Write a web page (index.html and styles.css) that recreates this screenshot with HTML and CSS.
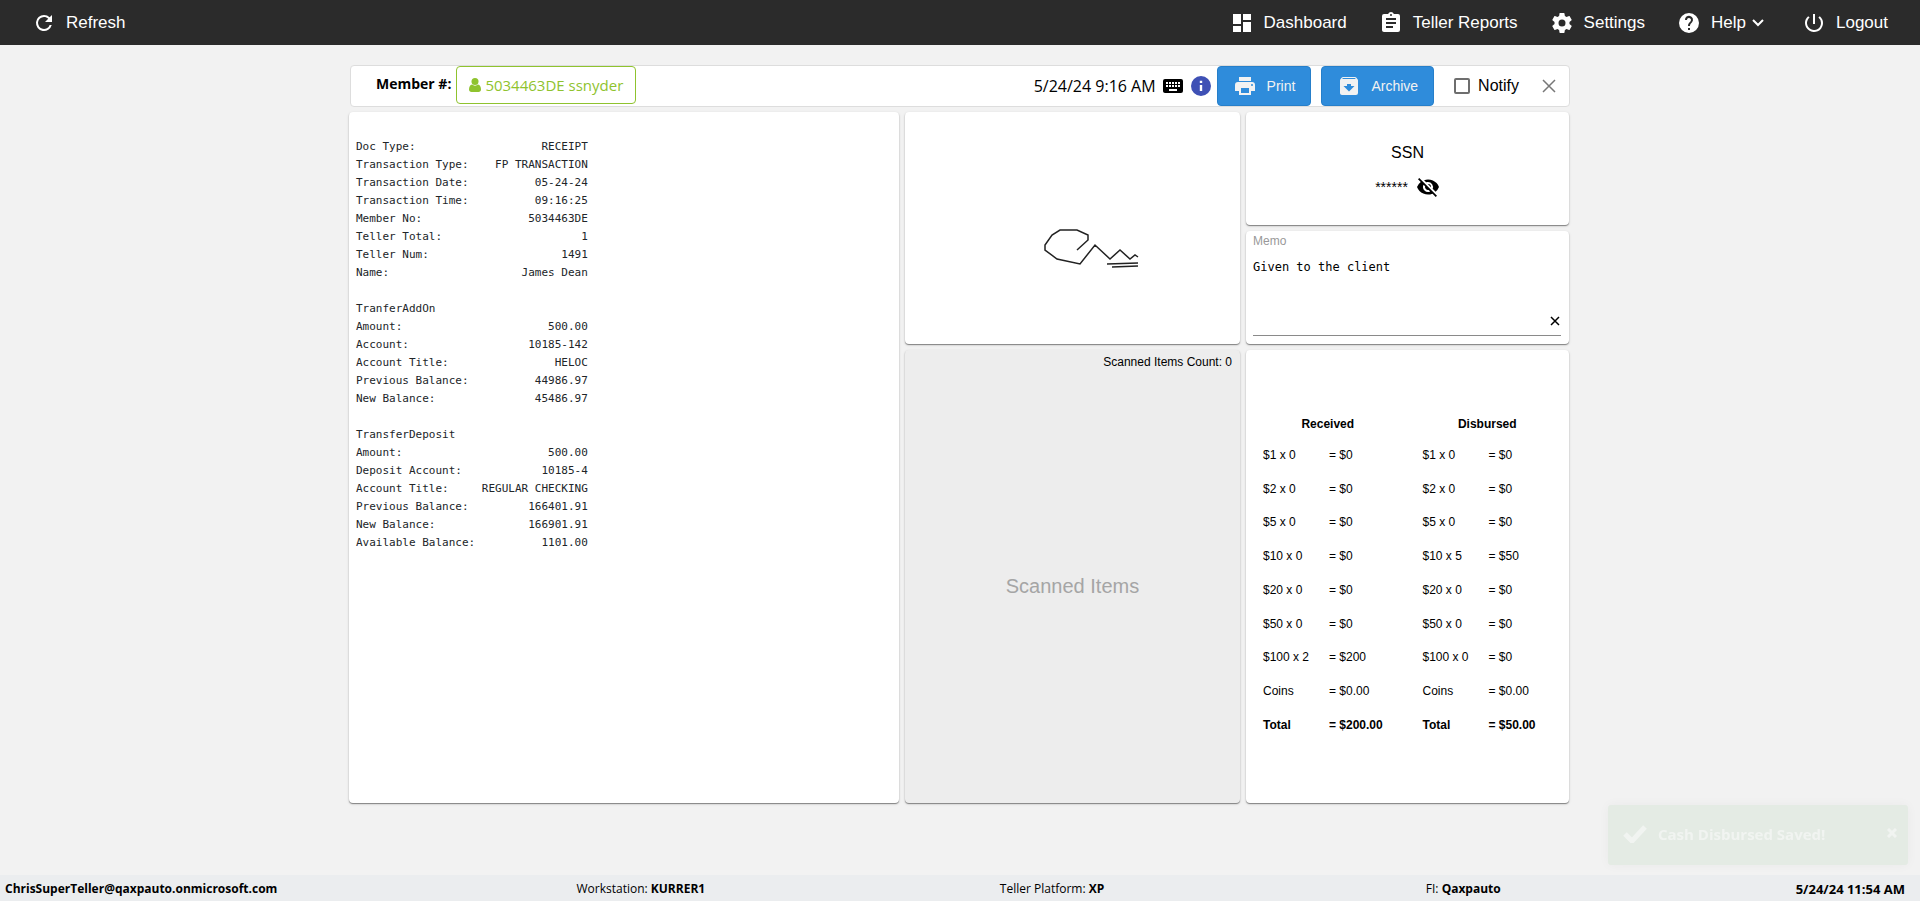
FILE: index.html
```html
<!DOCTYPE html>
<html lang="en">
<head>
<meta charset="utf-8">
<title>Teller receipt</title>
<link rel="stylesheet" href="styles.css">
</head>
<body>
<header class="topbar">
  <a class="nav-link" href="#refresh"><svg class="icon" viewBox="0 0 24 24"><path d="M17.65 6.35A7.96 7.96 0 0 0 12 4a8 8 0 1 0 7.73 10h-2.08A6 6 0 1 1 12 6c1.66 0 3.14.69 4.22 1.78L13 11h7V4z"/></svg>Refresh</a>
  <nav class="nav">
    <a class="nav-link" href="#dashboard"><svg class="icon" viewBox="0 0 24 24"><path d="M3 13h8V3H3zm0 8h8v-6H3zm10 0h8V11h-8zm0-18v6h8V3z"/></svg>Dashboard</a>
    <a class="nav-link" href="#reports"><svg class="icon" viewBox="0 0 24 24"><path d="M19 3h-4.18C14.4 1.84 13.3 1 12 1s-2.4.84-2.82 2H5a2 2 0 0 0-2 2v14c0 1.1.9 2 2 2h14a2 2 0 0 0 2-2V5a2 2 0 0 0-2-2zm-7 0a1 1 0 1 1 0 2 1 1 0 0 1 0-2zm2 14H7v-2h7zm3-4H7v-2h10zm0-4H7V7h10z"/></svg>Teller Reports</a>
    <a class="nav-link" href="#settings"><svg class="icon" viewBox="0 0 24 24"><path d="M19.43 12.98c.04-.32.07-.64.07-.98s-.03-.66-.07-.98l2.11-1.65c.19-.15.24-.42.12-.64l-2-3.46c-.12-.22-.39-.3-.61-.22l-2.49 1c-.52-.4-1.08-.73-1.69-.98l-.38-2.65A.49.49 0 0 0 14 2h-4c-.25 0-.46.18-.49.42l-.38 2.65c-.61.25-1.17.59-1.69.98l-2.49-1c-.23-.09-.49 0-.61.22l-2 3.46c-.13.22-.07.49.12.64l2.11 1.65c-.04.32-.07.65-.07.98s.03.66.07.98l-2.11 1.65c-.19.15-.24.42-.12.64l2 3.46c.12.22.39.3.61.22l2.49-1c.52.4 1.08.73 1.69.98l.38 2.65c.03.24.24.42.49.42h4c.25 0 .46-.18.49-.42l.38-2.65c.61-.25 1.17-.59 1.69-.98l2.49 1c.23.09.49 0 .61-.22l2-3.46c.12-.22.07-.49-.12-.64zM12 15.5a3.5 3.5 0 1 1 0-7 3.5 3.5 0 0 1 0 7z"/></svg>Settings</a>
    <a class="nav-link" href="#help"><svg class="icon" viewBox="0 0 24 24"><path d="M12 2a10 10 0 1 0 0 20 10 10 0 0 0 0-20zm1 17h-2v-2h2zm2.07-7.75-.9.92C13.45 12.9 13 13.5 13 15h-2v-.5c0-1.1.45-2.1 1.17-2.83l1.24-1.26A2 2 0 1 0 10 9H8a4 4 0 1 1 7.07 2.25z"/></svg>Help<svg class="chevron" viewBox="0 0 12 8"><path d="M1 1l5 5 5-5"/></svg></a>
    <a class="nav-link" href="#logout"><svg class="icon" viewBox="0 0 24 24"><path d="M13 3h-2v10h2zm4.83 2.17-1.42 1.42A6.92 6.92 0 0 1 19 12a7 7 0 1 1-11.42-5.42L6.17 5.17A8.93 8.93 0 0 0 3 12a9 9 0 1 0 14.83-6.83z"/></svg>Logout</a>
  </nav>
</header>

<main class="page">
  <section class="toolbar">
    <span class="member-label">Member #:</span>
    <button class="member" type="button"><svg class="user-icon" viewBox="0 0 12 14"><circle cx="6" cy="3.500" r="3.500"/><path d="M3 6.500C1 7 0 8.800 0 11.500 0 13 1 14 2.500 14h7c1.500 0 2.500-1 2.500-2.500C12 8.800 11 7 9 6.500 7.500 8 4.500 8 3 6.500z"/></svg>5034463DE ssnyder</button>
    <time class="stamp">5/24/24 9:16 AM</time>
    <svg class="icon keyboard" viewBox="0 0 24 24"><path d="M20 5H4a2 2 0 0 0-2 2v10c0 1.100.9 2 2 2h16a2 2 0 0 0 2-2V7a2 2 0 0 0-2-2zm-9 3h2v2h-2zm0 3h2v2h-2zM8 8h2v2H8zm0 3h2v2H8zm-1 2H5v-2h2zm0-3H5V8h2zm9 7H8v-2h8zm0-4h-2v-2h2zm0-3h-2V8h2zm3 3h-2v-2h2zm0-3h-2V8h2z"/></svg>
    <svg class="icon info" viewBox="0 0 24 24"><path d="M12 2a10 10 0 1 0 0 20 10 10 0 0 0 0-20zm1.200 15h-2.400v-6h2.400zm0-8h-2.400V6.700h2.400z"/></svg>
    <button class="action print" type="button"><svg class="action-icon" viewBox="0 0 24 24"><path d="M19 8H5a3 3 0 0 0-3 3v6h4v4h12v-4h4v-6a3 3 0 0 0-3-3zm-3 11H8v-5h8zm3-7a1 1 0 1 1 0-2 1 1 0 0 1 0 2zm-1-9H6v4h12z"/></svg>Print</button>
    <button class="action archive" type="button"><svg class="action-icon" viewBox="0 0 24 24"><path d="M20.540 5.230l-1.390-1.680C18.880 3.210 18.470 3 18 3H6c-.47 0-.88.21-1.160.55L3.460 5.230C3.170 5.570 3 6.020 3 6.500V19c0 1.100.9 2 2 2h14a2 2 0 0 0 2-2V6.500c0-.48-.17-.93-.46-1.270zM12 17.500L6.500 12H10v-2h4v2h3.500zM5.120 5l.81-1h12l.94 1z"/></svg>Archive</button>
    <label class="notify"><input class="notify-box" type="checkbox">Notify</label>
    <button class="close" type="button" aria-label="Close"><svg class="close-icon" viewBox="0 0 14 14"><path d="M1 1l12 12M13 1L1 13"/></svg></button>
  </section>

  <div class="board">
    <section class="card receipt">
<pre class="receipt-text">Doc Type:                   RECEIPT
Transaction Type:    FP TRANSACTION
Transaction Date:          05-24-24
Transaction Time:          09:16:25
Member No:                5034463DE
Teller Total:                     1
Teller Num:                    1491
Name:                    James Dean

TranferAddOn
Amount:                      500.00
Account:                  10185-142
Account Title:                HELOC
Previous Balance:          44986.97
New Balance:               45486.97

TransferDeposit
Amount:                      500.00
Deposit Account:            10185-4
Account Title:     REGULAR CHECKING
Previous Balance:         166401.91
New Balance:              166901.91
Available Balance:          1101.00</pre>
    </section>

    <section class="card signature">
      <svg class="ink" viewBox="0 0 96 42"><path d="M34 22L45 12V7L34 2H17L9 7 2 17v5l12 9 23 5L52 17l15 14 10-9 10 9 5-4 3 2M64 36l31-1M69 39l26-1"/></svg>
    </section>

    <section class="card scanned">
      <p class="scanned-count">Scanned Items Count: 0</p>
      <p class="scanned-empty">Scanned Items</p>
    </section>

    <section class="card ssn">
      <h2 class="ssn-title">SSN</h2>
      <div class="ssn-row"><span class="ssn-mask">******</span><button class="eye" type="button" aria-label="Show SSN"><svg class="eye-icon" viewBox="0 0 24 24"><path d="M12 7a5 5 0 0 1 4.640 6.830l2.920 2.920A11.820 11.820 0 0 0 22.990 12 11.830 11.830 0 0 0 8.010 5.200l2.160 2.160C10.740 7.130 11.350 7 12 7zM2 4.270l2.280 2.280.46.46A11.800 11.800 0 0 0 1 12a11.830 11.830 0 0 0 15.380 6.660l.42.42L19.730 22 21 20.730 3.270 3zM7.530 9.800l1.550 1.550a3 3 0 0 0 3.570 3.570l1.550 1.550A5 5 0 0 1 7.530 9.800zm4.310-.78l3.150 3.150.02-.16a3 3 0 0 0-3-3z"/></svg></button></div>
    </section>

    <section class="card memo">
      <label class="memo-label" for="memo">Memo</label>
      <div class="memo-field">
        <textarea class="memo-text" id="memo">Given to the client</textarea>
        <button class="clear" type="button" aria-label="Clear memo"><svg class="clear-icon" viewBox="0 0 10 10"><path d="M1 1l8 8M9 1L1 9"/></svg></button>
      </div>
    </section>

    <section class="card cash">
      <table class="cash-table">
        <colgroup><col class="count-col"><col></colgroup>
        <thead><tr><th colspan="2">Received</th></tr></thead>
        <tbody>
          <tr><td>$1 x 0</td><td>= $0</td></tr>
          <tr><td>$2 x 0</td><td>= $0</td></tr>
          <tr><td>$5 x 0</td><td>= $0</td></tr>
          <tr><td>$10 x 0</td><td>= $0</td></tr>
          <tr><td>$20 x 0</td><td>= $0</td></tr>
          <tr><td>$50 x 0</td><td>= $0</td></tr>
          <tr><td>$100 x 2</td><td>= $200</td></tr>
          <tr><td>Coins</td><td>= $0.00</td></tr>
          <tr class="total"><td>Total</td><td>= $200.00</td></tr>
        </tbody>
      </table>
      <table class="cash-table">
        <colgroup><col class="count-col"><col></colgroup>
        <thead><tr><th colspan="2">Disbursed</th></tr></thead>
        <tbody>
          <tr><td>$1 x 0</td><td>= $0</td></tr>
          <tr><td>$2 x 0</td><td>= $0</td></tr>
          <tr><td>$5 x 0</td><td>= $0</td></tr>
          <tr><td>$10 x 5</td><td>= $50</td></tr>
          <tr><td>$20 x 0</td><td>= $0</td></tr>
          <tr><td>$50 x 0</td><td>= $0</td></tr>
          <tr><td>$100 x 0</td><td>= $0</td></tr>
          <tr><td>Coins</td><td>= $0.00</td></tr>
          <tr class="total"><td>Total</td><td>= $50.00</td></tr>
        </tbody>
      </table>
    </section>
  </div>
</main>

<div class="toast" role="status">
  <svg class="toast-check" viewBox="0 0 24 18"><path d="M2 9l7 7L22 2"/></svg>
  <span class="toast-text">Cash Disbursed Saved!</span>
  <button class="toast-close" type="button" aria-label="Dismiss"><svg class="toast-x" viewBox="0 0 10 10"><path d="M1 1l8 8M9 1L1 9"/></svg></button>
</div>

<footer class="statusbar">
  <b class="user">ChrisSuperTeller@qaxpauto.onmicrosoft.com</b>
  <span>Workstation: <b>KURRER1</b></span>
  <span>Teller Platform: <b>XP</b></span>
  <span>FI: <b>Qaxpauto</b></span>
  <b class="clock">5/24/24 11:54 AM</b>
</footer>
</body>
</html>
```
FILE: styles.css
```css
* { box-sizing: border-box; }

body {
  margin: 0;
  min-height: 100vh;
  display: flex;
  flex-direction: column;
  background: #f2f2f2;
  color: #000;
  font: 16px/20px "Liberation Sans", Arial, sans-serif;
}

button {
  font: inherit;
  cursor: pointer;
}

.icon {
  width: 24px;
  height: 24px;
  flex: none;
  fill: currentColor;
}

/* Top bar */
.topbar {
  display: flex;
  justify-content: space-between;
  align-items: center;
  height: 45px;
  padding: 0 32px;
  background: #2b2b2b;
}

.nav {
  display: flex;
  gap: 32px;
}

.nav-link {
  display: flex;
  align-items: center;
  gap: 10px;
  color: #fff;
  font-size: 17px;
  text-decoration: none;
}

.chevron {
  width: 12px;
  height: 8px;
  margin: 0 6px 0 -4px;
  fill: none;
  stroke: currentColor;
  stroke-width: 2;
}

/* Toolbar */
.page {
  flex: 1;
  display: flex;
  flex-direction: column;
  width: 100%;
  max-width: 1222px;
  margin: 0 auto;
  padding: 20px 0 72px;
}

.toolbar {
  display: flex;
  align-items: center;
  height: 42px;
  margin: 0 1px;
  padding: 0 6px 0 25px;
  background: #fff;
  border: 1px solid #ddd;
  border-radius: 4px;
}

.member-label {
  margin-right: 5px;
  padding-bottom: 4px;
  font: bold 14px/20px "Open Sans", "Noto Sans", sans-serif;
}

.member {
  display: flex;
  align-items: center;
  align-self: flex-start;
  gap: 4px;
  height: 38px;
  padding: 0 12px;
  color: #8fc32e;
  background: #fff;
  border: 1px solid #8fc32e;
  border-radius: 4px;
  font: 15px/20px "Open Sans", "Noto Sans", sans-serif;
}

.user-icon {
  width: 12px;
  height: 14px;
  fill: currentColor;
}

.stamp {
  margin-left: auto;
  font: 16px/20px "Open Sans", "Noto Sans", sans-serif;
}

.keyboard { margin-left: 5px; }

.info {
  margin: 0 4px;
  color: #3f51b5;
}

.action {
  display: flex;
  align-items: center;
  gap: 10px;
  height: 40px;
  padding: 0 15px;
  color: #f2f2f2;
  background: #2f8cdb;
  border: 1px solid #267fca;
  border-radius: 4px;
  font-size: 14px;
}

.archive { margin-left: 10px; }

.action-icon {
  width: 24px;
  height: 24px;
  fill: currentColor;
}

.notify {
  display: flex;
  align-items: center;
  gap: 8px;
  margin-left: 20px;
}

.notify-box {
  appearance: none;
  width: 16px;
  height: 16px;
  margin: 0;
  border: 2px solid #6e6e6e;
  border-radius: 2px;
}

.close {
  display: flex;
  margin-left: 16px;
  padding: 7px;
  background: none;
  border: 0;
}

.close-icon {
  width: 14px;
  height: 14px;
  stroke: #777;
  stroke-width: 1.5;
}

/* Cards */
.board {
  flex: 1;
  display: grid;
  grid-template-columns: 550fr 335fr 323fr;
  grid-template-rows: 113px 113px 1fr;
  gap: 6px;
  margin: 5px 2px 0 0;
}

.card {
  min-width: 0;
  background: #fff;
  border-radius: 4px;
  box-shadow: 0 1px 1px rgba(0, 0, 0, .4), 0 1px 3px rgba(0, 0, 0, .15);
}

.receipt {
  grid-row: 1 / 4;
  padding: 26px 7px;
}

.receipt-text {
  margin: 0;
  color: #212529;
  font: 11px/18px "DejaVu Sans Mono", monospace;
}

.signature {
  grid-column: 2;
  grid-row: 1 / 3;
  display: flex;
  align-items: center;
  justify-content: center;
  padding: 42px 0 0 36px;
}

.ink {
  width: 96px;
  height: 42px;
  fill: none;
  stroke: #222;
  stroke-width: 1.5;
}

.scanned {
  grid-column: 2;
  grid-row: 3;
  display: flex;
  flex-direction: column;
  background: #ededed;
}

.scanned-count {
  margin: 0;
  padding: 2px 8px;
  font-size: 12px;
  text-align: right;
}

.scanned-empty {
  flex: 1;
  display: flex;
  align-items: center;
  justify-content: center;
  margin: 0;
  padding-bottom: 6px;
  color: #a5a5a5;
  font-size: 20px;
}

.ssn {
  grid-column: 3;
  padding: 31px 8px 0;
}

.ssn-title {
  margin: 0 0 12px;
  font-size: 16px;
  font-weight: normal;
  text-align: center;
}

.ssn-row {
  display: flex;
  justify-content: center;
  align-items: center;
  gap: 8px;
}

.ssn-mask { font: 14px/20px "Liberation Sans", Arial, sans-serif; }

.eye {
  display: flex;
  padding: 0;
  background: none;
  border: 0;
}

.eye-icon {
  width: 24px;
  height: 24px;
}

.memo {
  grid-column: 3;
  display: flex;
  flex-direction: column;
  padding: 0 8px 8px 7px;
}

.memo-label {
  color: #999;
  font-size: 12px;
}

.memo-field {
  flex: 1;
  display: flex;
  align-items: flex-end;
  border-bottom: 1px solid #8a8a8a;
}

.memo-text {
  flex: 1;
  align-self: stretch;
  min-width: 0;
  padding: 6px 0 0;
  border: 0;
  background: none;
  resize: none;
  color: #000;
  font: 12px/20px "DejaVu Sans Mono", monospace;
}

.clear {
  padding: 0 1px 9px;
  background: none;
  border: 0;
  line-height: 0;
}

.clear-icon {
  width: 10px;
  height: 10px;
  stroke: #000;
  stroke-width: 1.5;
}

.cash {
  grid-column: 3;
  display: grid;
  grid-template-columns: 1fr 1fr;
  column-gap: 8px;
  align-items: start;
  padding: 60px 0 0 12px;
}

.cash-table {
  width: 100%;
  height: 332px;
  table-layout: fixed;
  border-collapse: collapse;
  font-size: 12px;
}

.count-col { width: 66px; }

.cash-table th {
  height: 28px;
  padding: 0 12px 0 0;
}

.cash-table td {
  height: 33px;
  padding: 0 5px;
}

.total { font-weight: bold; }

/* Toast */
.toast {
  position: fixed;
  right: 12px;
  bottom: 36px;
  display: flex;
  align-items: center;
  width: 300px;
  height: 60px;
  padding: 0 11px 3px 15px;
  color: #f1f4f1;
  background: #e4ebe4;
  border-radius: 3px;
  box-shadow: 0 0 12px rgba(0, 0, 0, .04);
  font: bold 15px/20px "Open Sans", "Noto Sans", sans-serif;
}

.toast-check {
  width: 24px;
  height: 18px;
  margin-right: 11px;
  fill: none;
  stroke: currentColor;
  stroke-width: 5;
}

.toast-close {
  margin-left: auto;
  padding: 0 0 2px;
  color: inherit;
  background: none;
  border: 0;
  line-height: 0;
}

.toast-x {
  width: 10px;
  height: 10px;
  stroke: currentColor;
  stroke-width: 3;
}

/* Status bar */
.statusbar {
  display: grid;
  grid-template-columns: 430fr 411fr 411fr 411fr 236fr;
  height: 26px;
  padding: 4px 15px 2px 5px;
  background: #ebedef;
  font: 12px/20px "Open Sans", "Noto Sans", sans-serif;
  text-align: center;
}

.user { text-align: left; }

.clock {
  font-size: 13px;
  text-align: right;
}
```
